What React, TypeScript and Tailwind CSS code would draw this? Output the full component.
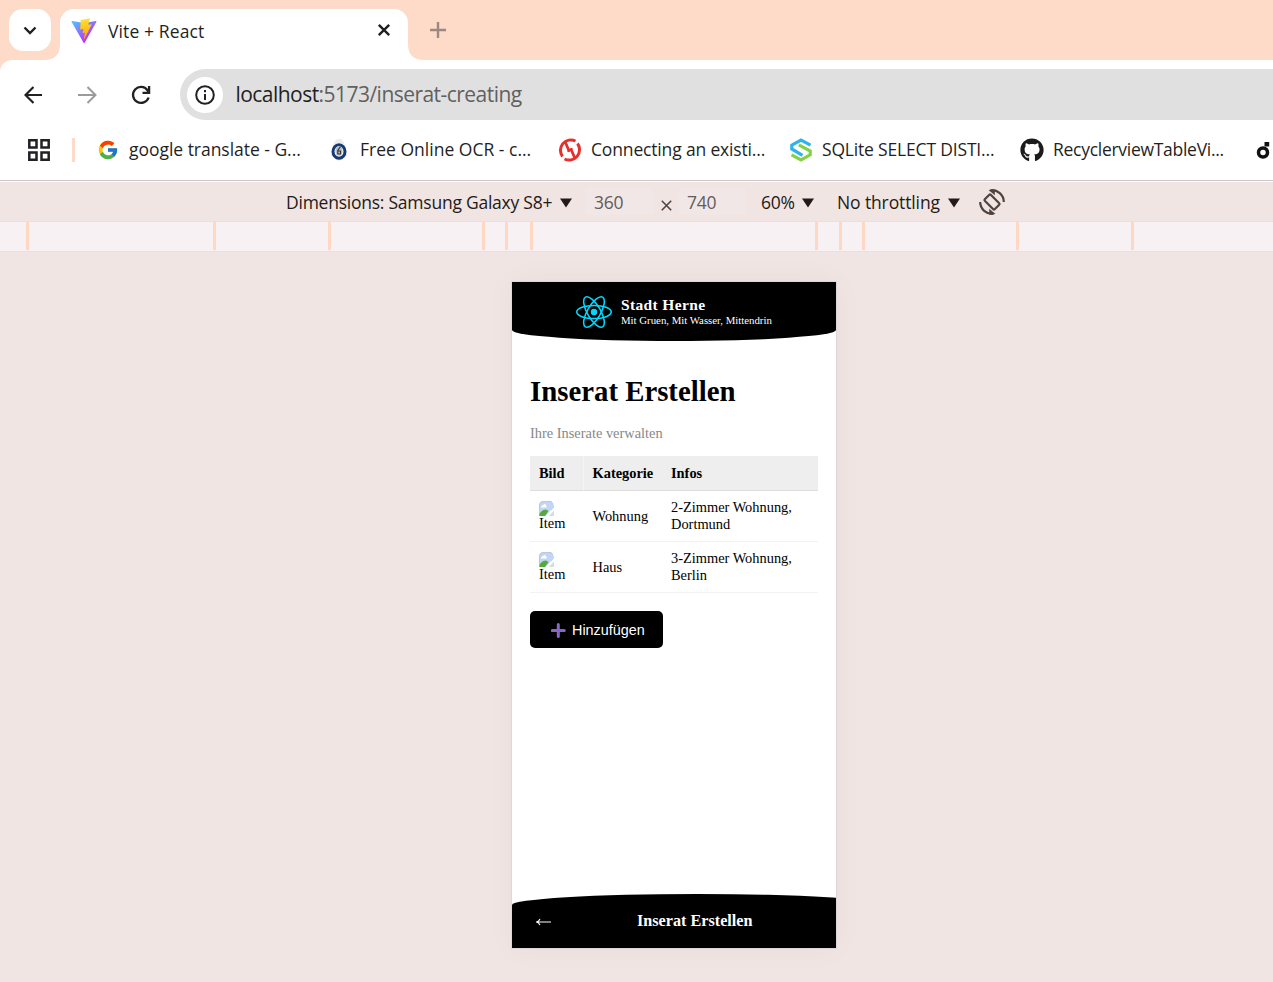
import React from "react";
import { FaGithub } from "react-icons/fa";
import { FcGoogle } from "react-icons/fc";

function ViteLogo() {
  return (
    <svg width="26" height="26" viewBox="0 0 410 404" fill="none">
      <defs>
        <linearGradient id="va" x1="6" y1="33" x2="235" y2="344" gradientUnits="userSpaceOnUse">
          <stop stopColor="#41D1FF" />
          <stop offset="1" stopColor="#BD34FE" />
        </linearGradient>
        <linearGradient id="vb" x1="194" y1="9" x2="236" y2="293" gradientUnits="userSpaceOnUse">
          <stop stopColor="#FFEA83" />
          <stop offset=".08" stopColor="#FFDD35" />
          <stop offset="1" stopColor="#FFA800" />
        </linearGradient>
      </defs>
      <path fill="url(#va)" d="M399.641 59.525L215.643 388.545C211.844 395.338 202.084 395.378 198.228 388.618L10.582 59.556C6.381 52.19 12.68 43.267 21.028 44.759L205.223 77.682C206.398 77.892 207.601 77.89 208.776 77.676L389.119 44.806C397.439 43.289 403.768 52.143 399.641 59.525Z" />
      <path fill="url(#vb)" d="M292.965 1.574L156.801 28.255C154.563 28.694 152.906 30.59 152.771 32.866L144.395 174.33C144.198 177.662 147.258 180.248 150.51 179.498L188.42 170.749C191.967 169.931 195.172 173.055 194.443 176.622L183.18 231.775C182.422 235.487 185.907 238.661 189.532 237.56L212.947 230.446C216.577 229.344 220.065 232.527 219.297 236.242L201.398 322.875C200.278 328.294 207.486 331.249 210.492 326.603L212.5 323.5L323.454 102.072C325.312 98.365 322.108 94.137 318.036 94.923L279.014 102.454C275.347 103.161 272.227 99.746 273.262 96.158L298.731 7.867C299.767 4.273 296.636 .855 292.965 1.574Z" />
    </svg>
  );
}

function ReactLogo() {
  return (
    <svg width="36" height="34" viewBox="-11.5 -10.6 23 21.2" fill="none" stroke="#00d8ff">
      <circle r="2.05" fill="#00d8ff" stroke="none" />
      <ellipse rx="11" ry="4.2" />
      <ellipse rx="11" ry="4.2" transform="rotate(60)" />
      <ellipse rx="11" ry="4.2" transform="rotate(120)" />
    </svg>
  );
}

function BrokenImage() {
  return (
    <svg width="15" height="15" viewBox="0 0 15 15">
      <path d="M0 6Q0 0 6 0H9Q14 0 15 5L7 15H0Z" fill="#c3d5f5" />
      <path d="M2 6.5Q2 4 4.2 4Q5.5 2 7 4.3Q8 5 7.6 6.5Z" fill="#fff" />
      <path d="M0 15Q1 9 7 8.5L9.5 10L6 15Z" fill="#54ab3c" />
      <path d="M0 15V6Q0 0 6 0H9Q12 0 13.6 2" fill="none" stroke="#aeb4bd" strokeWidth=".8" />
      <path d="M13 2.2Q15 4 15 6.5L12.5 9.5L9 9Z" fill="#c3d5f5" />
      <path d="M15 7L6.5 15H9L15 9.2Z" fill="#fff" />
      <path d="M15 9.5L9.8 15H15Z" fill="#d5dde2" />
    </svg>
  );
}

function Caret() {
  return (
    <svg className="mt-[2px]" width="12" height="10" viewBox="0 0 12 10">
      <path d="M0 .5H12L6 9.5Z" fill="#231a17" />
    </svg>
  );
}

function RotateIcon() {
  return (
    <svg className="ml-[18px]" width="28" height="28" viewBox="0 0 28 28" fill="none" stroke="#51443f" strokeWidth="2.2">
      <rect x="9.8" y="7" width="8.4" height="14" rx="1" transform="rotate(-45 14 14)" />
      <path d="M12.5 2.3A11.8 11.8 0 0 1 25.8 14" />
      <path d="M15.5 25.7A11.8 11.8 0 0 1 2.2 14" />
      <path d="M10.5 2L16.8 1.3V7.2Z" fill="#51443f" stroke="none" />
      <path d="M17.5 26L11.2 26.7V20.8Z" fill="#51443f" stroke="none" />
    </svg>
  );
}

function OcrIcon() {
  return (
    <svg width="22" height="24" viewBox="0 0 22 24">
      <path d="M5 8Q7 0 11 1Q15 0 17 8L19 18L11 23L3 18Z" fill="#ececec" />
      <ellipse cx="11" cy="13.5" rx="6" ry="6.8" fill="#fff" stroke="#173a75" strokeWidth="3" />
      <ellipse cx="11" cy="13" rx="3.6" ry="4.8" fill="#b9bdc5" />
      <path d="M12.5 8.5L9.8 12.5V16H12.5V13H10" fill="none" stroke="#333" strokeWidth="1.1" />
    </svg>
  );
}

function RedIcon() {
  return (
    <svg width="24" height="24" viewBox="0 0 24 24" fill="none" stroke="#e5302c">
      <path d="M4.5 18.5A10.4 10.4 0 0 1 17.5 3" strokeWidth="3" />
      <path d="M19.5 5.5A10.4 10.4 0 0 1 6.5 21" strokeWidth="3" />
      <path d="M7 3.5L11.2 13.2M12.8 10.8L17 20.5" strokeWidth="2.8" />
      <path d="M9.5 13.5L12.2 12.6M14.5 10.5L11.8 11.4" strokeWidth="1.8" />
    </svg>
  );
}

function SqliteIcon() {
  return (
    <svg width="22" height="24" viewBox="0 0 22 24" fill="none" strokeWidth="3.2">
      <path d="M20.5 7.2L11 2L1.8 7.2V11L12.5 17.3" stroke="#2fb2ee" />
      <path d="M1.5 16.8L11 22L20.2 16.8V13L8.8 6.9" stroke="#84d148" />
    </svg>
  );
}

const ruler = [26, 184, 112, 151, 20, 22, 282, 21, 20, 151, 112];

const bookmarks = [
  { icon: <FcGoogle size={22} />, label: "google translate - G...", pad: "gap-[10px]", box: "w-[231px]", ls: "tracking-[-0.03px]" },
  { icon: <OcrIcon />, label: "Free Online OCR - c...", pad: "gap-[10px]", box: "w-[230px]", ls: "tracking-[0.01px]" },
  { icon: <RedIcon />, label: "Connecting an existi...", pad: "gap-[9px]", box: "w-[232px]", ls: "tracking-[-0.16px]" },
  { icon: <SqliteIcon />, label: "SQLite SELECT DISTI...", pad: "gap-[10px]", box: "w-[230px]", ls: "tracking-[-0.18px]" },
  { icon: <FaGithub size={24} color="#1b1b1b" />, label: "RecyclerviewTableVi...", pad: "gap-[9px]", box: "w-[235px]", ls: "tracking-[-0.28px]" },
];

const rows = [
  { kategorie: "Wohnung", infos: ["2-Zimmer Wohnung,", "Dortmund"] },
  { kategorie: "Haus", infos: ["3-Zimmer Wohnung,", "Berlin"] },
];

function TabStrip() {
  return (
    <div className="flex h-[60px] bg-[#fddbc8]">
      <div className="mt-[9px] ml-[9px] flex h-[42px] w-[42px] items-center justify-center rounded-[14px] bg-white">
        <svg width="14" height="9" viewBox="0 0 14 9" fill="none" stroke="#202020" strokeWidth="2.4">
          <path d="M1.5 1.5L7 7L12.5 1.5" />
        </svg>
      </div>
      <svg className="-mr-px ml-[-7px] self-end" width="17" height="16" viewBox="0 0 17 16">
        <path d="M0 16Q16 16 16 0H17V16Z" fill="#fff" />
      </svg>
      <div className="mt-[9px] flex h-[51px] w-[348px] items-center rounded-t-[14px] bg-white pr-[17px] pb-[7px] pl-[11px]">
        <ViteLogo />
        <span className="ml-[11px] text-[17.5px] leading-6 tracking-[0.11px]">Vite + React</span>
        <svg className="mt-[-2px] ml-auto" width="14" height="14" viewBox="0 0 14 14" stroke="#202020" strokeWidth="2.4">
          <path d="M1.8 1.8L12.2 12.2M12.2 1.8L1.8 12.2" />
        </svg>
      </div>
      <svg className="self-end" width="16" height="16" viewBox="0 0 16 16">
        <path d="M0 0Q0 16 16 16H0Z" fill="#fff" />
      </svg>
      <svg className="mt-[22px] ml-[6px]" width="16" height="16" viewBox="0 0 16 16" stroke="#9d8880" strokeWidth="2.4">
        <path d="M8 0V16M0 8H16" />
      </svg>
    </div>
  );
}

function AddressRow() {
  return (
    <div className="bg-[#fddbc8]">
      <div className="flex h-[69px] items-center rounded-tl-[12px] bg-white pl-6">
        <svg width="19" height="18" viewBox="0 0 19 18" fill="none" stroke="#202124" strokeWidth="2.2">
          <path d="M18 9H1.5M9.5 1L1.5 9L9.5 17" />
        </svg>
        <svg className="ml-[35px]" width="19" height="18" viewBox="0 0 19 18" fill="none" stroke="#9b9b9b" strokeWidth="2">
          <path d="M0 9H17M9.5 1L17.5 9L9.5 17" />
        </svg>
        <svg className="ml-[34px]" width="20" height="20" viewBox="0 0 20 20" fill="none" stroke="#202124" strokeWidth="2.3">
          <path d="M17.6 12.5A8 8 0 1 1 16.5 5.2L18 7.2M18.1 1V7.8H11.5" />
        </svg>
        <div className="ml-[29px] flex h-[51px] flex-1 items-center rounded-l-full bg-[#e0e0e0] pl-[7px]">
          <div className="flex h-9 w-9 items-center justify-center rounded-full bg-white">
            <svg width="20" height="20" viewBox="0 0 20 20" fill="none" stroke="#202124" strokeWidth="2">
              <circle cx="10" cy="10" r="8.8" />
              <path d="M10 9V15M10 5V7.2" />
            </svg>
          </div>
          <span className="mt-[-2px] ml-[12.5px] text-[21px] leading-7 tracking-[-0.54px] text-[#606060]">
            <span className="text-[#1f1f1f]">localhost</span>:5173/inserat-creating
          </span>
        </div>
      </div>
    </div>
  );
}

function Bookmarks() {
  return (
    <div className="flex h-[51px] items-center overflow-hidden pb-[9px] pl-[28px]">
      <svg className="shrink-0" width="22" height="22" viewBox="0 0 22 22" fill="none" stroke="#202124" strokeWidth="2.5">
        <path d="M1.3 1.3H8.5V8.5H1.3ZM13.5 1.3H20.7V8.5H13.5ZM1.3 13.5H8.5V20.7H1.3ZM13.5 13.5H20.7V20.7H13.5Z" />
      </svg>
      <div className="mr-[22px] ml-[22px] h-6 w-[3px] shrink-0 bg-[#fddbc8]" />
      {bookmarks.map((b) => (
        <div key={b.label} className={`flex shrink-0 items-center text-[17.5px] leading-6 whitespace-nowrap ${b.pad} ${b.box} ${b.ls}`}>
          <span className="shrink-0">{b.icon}</span>
          <span className="mt-[-2px]">{b.label}</span>
        </div>
      ))}
      <svg className="shrink-0" width="18" height="22" viewBox="0 0 18 22">
        <circle cx="8" cy="13.5" r="4.5" fill="none" stroke="#111" strokeWidth="3.5" />
        <path d="M9.5 3H14.2V7.5H9.5Z" fill="#111" />
      </svg>
    </div>
  );
}

function DeviceToolbar() {
  return (
    <div className="flex h-10 items-center border-b border-[#fddbc8] bg-[#f1e5e3] pl-[286px] text-[17.5px] whitespace-nowrap text-[#231a17]">
      <span className="mt-[2px] w-[274px] tracking-[-0.24px]">Dimensions: Samsung Galaxy S8+</span>
      <Caret />
      <span className="ml-[13px] h-[27px] w-[69px] rounded bg-[#f1e7e6] pl-[9px] leading-[29px] tracking-[-0.3px] text-[#655b59]">360</span>
      <svg className="mt-[8px] ml-[7px]" width="11" height="11" viewBox="0 0 11 11" stroke="#51443f" strokeWidth="1.6">
        <path d="M.8 .8L10.2 10.2M10.2 .8L.8 10.2" />
      </svg>
      <span className="ml-[7px] h-[27px] w-[67px] rounded bg-[#f1e7e6] pl-[8px] leading-[29px] tracking-[-0.3px] text-[#655b59]">740</span>
      <span className="mt-[2px] ml-[15px] w-[41px] tracking-[-0.2px]">60%</span>
      <Caret />
      <span className="mt-[2px] ml-[23px] w-[111px] tracking-[-0.12px]">No throttling</span>
      <Caret />
      <RotateIcon />
    </div>
  );
}

function Phone() {
  return (
    <div className="flex h-[666px] w-[324px] flex-col overflow-hidden bg-white font-['Liberation_Serif',serif] text-black shadow-[0_0_0_1px_#ddd7dc,0_0_30px_rgba(60,30,50,0.04)]">
      <header className="flex h-[59px] rounded-b-[50%_11px] bg-black pl-[64px] text-white">
        <div className="mt-[13px]">
          <ReactLogo />
        </div>
        <div className="mt-[14px] ml-[9px]">
          <div className="text-[15.5px] leading-[18px] font-bold tracking-[0.36px]">Stadt Herne</div>
          <div className="text-[10.8px] leading-[13px]">Mit Gruen, Mit Wasser, Mittendrin</div>
        </div>
      </header>
      <main className="flex flex-1 flex-col px-[18px]">
        <h1 className="mt-[33px] text-[28.8px] leading-[34px] font-bold">Inserat Erstellen</h1>
        <p className="mt-[17px] text-[14.4px] leading-[17px] text-[#888]">Ihre Inserate verwalten</p>
        <div className="mt-[14px] grid w-full grid-cols-[54px_79px_155px] text-[14.4px] leading-[17px]">
          <div className="h-[35px] border-r border-b border-r-[#f5f5f5] border-b-[#ddd] bg-[#eee] pt-[9px] pl-[9px] font-bold">Bild</div>
          <div className="border-b border-[#ddd] bg-[#eee] pt-[9px] pl-[8.5px] font-bold">Kategorie</div>
          <div className="border-b border-[#ddd] bg-[#eee] pt-[9px] pl-[8px] font-bold">Infos</div>
          {rows.map((r) => (
            <React.Fragment key={r.kategorie}>
              <div className="h-[51px] border-b border-[#f2f2f2] pt-[10px] pl-[9px]">
                <BrokenImage />
                <div className="leading-[15px]">Item</div>
              </div>
              <div className="flex items-center border-b border-[#f2f2f2] pl-[8.5px]">{r.kategorie}</div>
              <div className="border-b border-[#f2f2f2] pt-[8px] pl-[8px]">
                <div>{r.infos[0]}</div>
                <div>{r.infos[1]}</div>
              </div>
            </React.Fragment>
          ))}
        </div>
        <button className="mt-[18px] flex h-[37px] w-[133px] items-center rounded-[5px] bg-black pt-[2px] pl-[21px] font-['Liberation_Sans',sans-serif] text-[14.4px] text-white">
          <svg className="mt-[-1px] mr-[6px]" width="15" height="15" viewBox="0 0 15 15">
            <path d="M7.3 1.5V13.5M1.3 7.5H13.3" stroke="#8467c9" strokeWidth="3" strokeLinecap="round" />
          </svg>
          Hinzufügen
        </button>
      </main>
      <footer className="flex h-[54px] w-[370px] shrink-0 items-center rounded-t-[50%_11px] bg-black pl-[24px] text-white">
        <svg className="mt-[2px]" width="15" height="8" viewBox="0 0 15 8" fill="none" stroke="#fff" strokeWidth="1.1">
          <path d="M15 4H1M4 1Q3 3.2 .6 4Q3 4.8 4 7" />
        </svg>
        <span className="ml-[86px] text-[16.2px] leading-5 font-bold">Inserat Erstellen</span>
      </footer>
    </div>
  );
}

export default function App() {
  return (
    <div className="flex h-[982px] w-[1273px] flex-col overflow-hidden bg-white font-['Open_Sans','Noto_Sans',sans-serif] text-[#1f1f1f]">
      <TabStrip />
      <AddressRow />
      <Bookmarks />
      <div className="h-[2px] shrink-0 border-t border-[#c9c9c9] bg-white" />
      <DeviceToolbar />
      <div className="flex h-[30px] shrink-0 border-b border-[#fddbc8] bg-[#f7f1f4] pb-px">
        {ruler.map((w, i) => (
          <div key={i} className="box-content h-full shrink-0 border-r-[3px] border-[#fed8c3]" style={{ width: w }} />
        ))}
      </div>
      <div className="flex flex-1 bg-[#f1e5e3] pt-[30px] pl-[512px]">
        <Phone />
      </div>
    </div>
  );
}
